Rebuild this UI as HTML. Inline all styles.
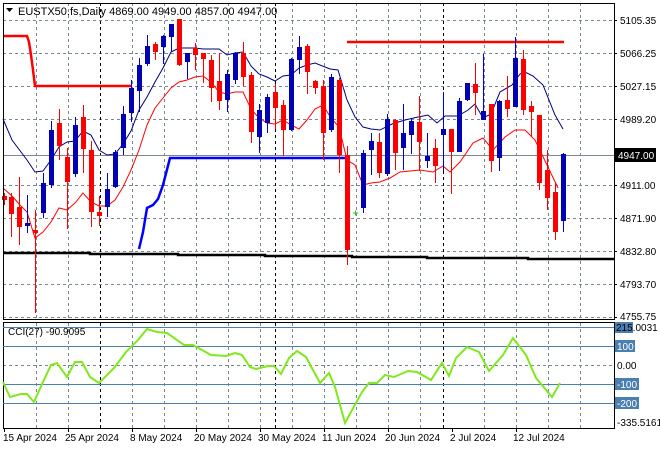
<!DOCTYPE html>
<html><head><meta charset="utf-8"><style>
html,body{margin:0;padding:0;background:#fff;width:660px;height:450px;overflow:hidden}
svg{display:block;font-family:"Liberation Sans",sans-serif}
</style></head><body>
<svg width="660" height="450" viewBox="0 0 660 450" xmlns="http://www.w3.org/2000/svg">
<rect width="660" height="450" fill="#fff"/>
<!-- grid main -->
<g stroke="#7b8794" stroke-width="1" stroke-dasharray="3,3" fill="none">
<path d="M3 20.5H614M3 53.5H614M3 86.5H614M3 119.5H614M3 185.5H614M3 218.5H614M3 251.5H614M3 284.5H614M3 317.5H614"/>
<path d="M36.5 3V320M68.5 3V320M132.5 3V320M164.5 3V320M196.5 3V320M228.5 3V320M260.5 3V320M292.5 3V320M324.5 3V320M356.5 3V320M388.5 3V320M420.5 3V320M484.5 3V320M516.5 3V320M548.5 3V320M580.5 3V320"/>
<path d="M36.5 323V428M68.5 323V428M132.5 323V428M164.5 323V428M196.5 323V428M228.5 323V428M260.5 323V428M292.5 323V428M324.5 323V428M356.5 323V428M388.5 323V428M420.5 323V428M484.5 323V428M516.5 323V428M548.5 323V428M580.5 323V428"/>
<path d="M3 365.5H614"/>
</g>
<g stroke="#000" stroke-width="1" stroke-dasharray="3,3">
<path d="M100.5 3V320M275.5 3V320M443.5 3V320M100.5 323V428M275.5 323V428M443.5 323V428"/>
</g>
<!-- current price line -->
<path d="M3 155.5H614" stroke="#7b8794" stroke-width="1"/>
<!-- indicator lines -->
<polyline fill="none" stroke="#ff0000" stroke-width="2.5" points="3,36 27,36 29,42 31,55 33,70 35,86 131,86"/>
<path d="M347 42H564" stroke="#ff0000" stroke-width="2.5"/>
<polyline fill="none" stroke="#0000ff" stroke-width="2.5" points="139,249 143,232 147,208 153,205 158,199 163,185 170,158 347,158"/>
<polyline fill="none" stroke="#000" stroke-width="2.5" points="3,253 90,253 90,254 178,254 178,255 265,255 265,256 352,256 352,257 427,257 427,258 528,258 528,259 614,259"/>
<polyline fill="none" stroke="#000080" stroke-width="1" points="3,119 12,140 27,160 35,172 43,171 51,160 59,147 67,142 75,141 83,131 91,135 99,150 107,155 115,154 123,144 131,131 139,110 147,97 155,82 163,68 171,52 179,48 195,48 203,49 219,49 227,55 235,53 243,52 251,66 259,74 267,77 275,81 283,76 291,75 299,68 307,65 315,63 330,69 338,70 347,100 355,117 363,127 371,129 380,130 392,124 405,120 418,117 428,115 437,123 445,116 458,116 468,110 475,104 483,118 491,114 500,92 512,85 520,74 525,72 533,76 543,85 555,115 563,129"/>
<polyline fill="none" stroke="#ff0000" stroke-width="1" points="3,188 12,196 20,205 27,212 35,238 43,232 51,222 59,208 67,210 75,203 83,193 91,202 99,206 107,206 115,200 123,187 131,170 139,150 147,125 155,108 163,98 171,88 179,82 187,80 195,77 203,76 211,82 219,92 227,94 235,92 243,92 251,109 259,118 267,123 275,124 283,120 291,125 299,129 307,120 315,109 323,105 331,118 339,127 347,160 355,165 363,185 371,183 380,182 390,178 400,172 420,170 433,172 443,166 450,172 460,162 473,143 483,138 493,150 505,137 515,130 525,130 535,140 547,165 558,188"/>
<!-- candles -->
<g stroke-width="1">
<g stroke="#ff0000" fill="#ff0000">
<path d="M4.5 193V205M11.5 193V237M19.5 177V245M35.5 210V313M59.5 109V160M67.5 148V229M83.5 105V173M91.5 141V227M99.5 196V226M155.5 42V60M179.5 19V66M195.5 43V70M203.5 53V83M211.5 55V102M219.5 53V110M243.5 42V86M251.5 72V143M275.5 84V129M283.5 100V156M307.5 44V94M315.5 80V94M323.5 80V160M339.5 78V173M347.5 146V265M379.5 133V178M395.5 119V170M419.5 96V171M435.5 139V183M451.5 129V194M475.5 63V115M491.5 104V172M507.5 76V117M523.5 50V115M531.5 101V137M539.5 115V190M547.5 150V210M555.5 182V240"/>
</g>
<g fill="#ff0000" stroke="none">
<rect x="2" y="196" width="5" height="4"/><rect x="9" y="197" width="5" height="17"/><rect x="17" y="207" width="5" height="20"/><rect x="33" y="230" width="5" height="3"/><rect x="57" y="123" width="5" height="23"/><rect x="65" y="157" width="5" height="25"/><rect x="81" y="117" width="5" height="32"/><rect x="89" y="150" width="5" height="62"/><rect x="97" y="212" width="5" height="4"/><rect x="153" y="44" width="5" height="8"/><rect x="177" y="19" width="5" height="46"/><rect x="193" y="48" width="5" height="7"/><rect x="201" y="53" width="5" height="6"/><rect x="209" y="60" width="5" height="28"/><rect x="217" y="81" width="5" height="20"/><rect x="241" y="53" width="5" height="24"/><rect x="249" y="75" width="5" height="57"/><rect x="273" y="92" width="5" height="16"/><rect x="281" y="105" width="5" height="25"/><rect x="305" y="46" width="5" height="26"/><rect x="313" y="81" width="5" height="7"/><rect x="321" y="86" width="5" height="47"/><rect x="337" y="80" width="5" height="75"/><rect x="345" y="155" width="5" height="95"/><rect x="377" y="142" width="5" height="31"/><rect x="393" y="120" width="5" height="33"/><rect x="417" y="122" width="5" height="20"/><rect x="433" y="148" width="5" height="18"/><rect x="449" y="129" width="5" height="23"/><rect x="473" y="84" width="5" height="9"/><rect x="489" y="104" width="5" height="57"/><rect x="505" y="100" width="5" height="9"/><rect x="521" y="59" width="5" height="51"/><rect x="529" y="106" width="5" height="6"/><rect x="537" y="115" width="5" height="68"/><rect x="545" y="170" width="5" height="28"/><rect x="553" y="192" width="5" height="40"/>
</g>
<g stroke="#0000d0">
<path d="M27.5 195V233M43.5 173V218M51.5 121V188M75.5 117V177M107.5 173V217M115.5 150V188M123.5 106V155M131.5 80V122M139.5 58V112M147.5 35V66M163.5 35V64M171.5 24V52M187.5 53V79M227.5 70V112M235.5 52V84M259.5 104V153M267.5 94V133M291.5 58V131M299.5 36V74M331.5 74V132M363.5 150V213M371.5 133V175M387.5 114V176M403.5 104V170M411.5 119V154M427.5 133V168M443.5 92V171M459.5 98V152M467.5 83V101M483.5 54V120M499.5 100V171M515.5 37V107M563.5 153V232"/>
</g>
<g fill="#0000b4" stroke="none">
<rect x="25" y="223" width="5" height="3"/><rect x="41" y="183" width="5" height="30"/><rect x="49" y="130" width="5" height="55"/><rect x="73" y="125" width="5" height="49"/><rect x="105" y="189" width="5" height="18"/><rect x="113" y="152" width="5" height="35"/><rect x="121" y="114" width="5" height="34"/><rect x="129" y="88" width="5" height="25"/><rect x="137" y="65" width="5" height="26"/><rect x="145" y="46" width="5" height="18"/><rect x="161" y="36" width="5" height="11"/><rect x="169" y="24" width="5" height="13"/><rect x="185" y="53" width="5" height="9"/><rect x="225" y="74" width="5" height="26"/><rect x="233" y="53" width="5" height="27"/><rect x="257" y="110" width="5" height="27"/><rect x="265" y="97" width="5" height="26"/><rect x="289" y="59" width="5" height="71"/><rect x="297" y="47" width="5" height="13"/><rect x="329" y="77" width="5" height="53"/><rect x="361" y="153" width="5" height="55"/><rect x="369" y="141" width="5" height="9"/><rect x="385" y="119" width="5" height="55"/><rect x="401" y="133" width="5" height="15"/><rect x="409" y="121" width="5" height="14"/><rect x="425" y="156" width="5" height="5"/><rect x="441" y="129" width="5" height="6"/><rect x="457" y="101" width="5" height="51"/><rect x="465" y="83" width="5" height="17"/><rect x="481" y="111" width="5" height="9"/><rect x="497" y="101" width="5" height="57"/><rect x="513" y="58" width="5" height="49"/><rect x="561" y="154" width="5" height="67"/>
</g>
</g>
<path d="M353 213H358M355.5 210.5V215.5" stroke="#22cc22" stroke-width="1"/>
<!-- frames -->
<rect x="3.5" y="3.5" width="611" height="316" fill="none" stroke="#000"/>
<rect x="3.5" y="322.5" width="611" height="106" fill="none" stroke="#000"/>
<!-- CCI levels -->
<g stroke="#4a7fb0" stroke-width="1">
<path d="M3 327.5H614M3 346.5H614M3 384.5H614M3 403.5H614"/>
</g>
<polyline fill="none" stroke="#80e81c" stroke-width="2" points="3,382 10,397 21,394 27,394 34,402 43,382 51,365 57,363 67,377 75,362 82,362 90,377 99,383 114,368 126,352 138,340 147,329 157,332 167,333 184,345 193,345 211,355 226,356 235,353 242,355 250,367 256,369 268,366 274,366 281,374 289,358 297,351 306,357 320,383 329,373 335,387 345,423 362,392 369,383 377,383 385,375 394,377 408,371 417,372 431,380 442,363 449,376 456,358 467,347 479,352 489,371 503,355 513,338 526,355 536,378 552,397 560,383"/>
<!-- header -->
<path d="M6 8H13L9.5 12Z" fill="#000"/>
<text x="18" y="15" font-size="11" fill="#000">EUSTX50.fs,Daily  4869.00 4949.00 4857.00 4947.00</text>
<text x="8" y="335" font-size="10" fill="#000">CCI(27) -90.9095</text>
<!-- price axis -->
<g font-size="10" fill="#000">
<text x="620" y="24">5105.35</text>
<text x="620" y="57">5066.25</text>
<text x="620" y="90">5027.15</text>
<text x="620" y="123">4989.20</text>
<text x="620" y="189">4911.00</text>
<text x="620" y="222">4871.90</text>
<text x="620" y="255">4832.80</text>
<text x="620" y="288">4793.70</text>
<text x="620" y="320">4755.75</text>
</g>
<g stroke="#000"><path d="M614 20.5h3M614 53.5h3M614 86.5h3M614 119.5h3M614 185.5h3M614 218.5h3M614 251.5h3M614 284.5h3M614 317.5h3"/></g>
<rect x="615" y="148" width="41" height="14" fill="#000"/>
<text x="618" y="159" font-size="10" fill="#fff">4947.00</text>
<!-- CCI axis -->
<rect x="615" y="322" width="18" height="11" fill="#4a7fb0"/>
<text x="616" y="331" font-size="10" fill="#000">215.0031</text>
<rect x="615" y="340" width="20" height="12" fill="#4a7fb0"/><text x="617" y="350" font-size="10" fill="#fff">100</text>
<text x="617" y="369" font-size="10" fill="#000">0.00</text>
<rect x="615" y="378" width="24" height="12" fill="#4a7fb0"/><text x="617" y="388" font-size="10" fill="#fff">-100</text>
<rect x="615" y="397" width="24" height="12" fill="#4a7fb0"/><text x="617" y="407" font-size="10" fill="#fff">-200</text>
<text x="617" y="426" font-size="10" fill="#000">-335.5161</text>
<!-- date axis -->
<g font-size="10" fill="#000">
<text x="3" y="441">15 Apr 2024</text>
<text x="65" y="441">25 Apr 2024</text>
<text x="130" y="441">8 May 2024</text>
<text x="194" y="441">20 May 2024</text>
<text x="258" y="441">30 May 2024</text>
<text x="322" y="441">11 Jun 2024</text>
<text x="385" y="441">20 Jun 2024</text>
<text x="450" y="441">2 Jul 2024</text>
<text x="513" y="441">12 Jul 2024</text>
</g>
<g stroke="#000"><path d="M4.5 429v3M68.5 429v3M132.5 429v3M196.5 429v3M260.5 429v3M324.5 429v3M388.5 429v3M452.5 429v3M516.5 429v3"/></g>
</svg>
</body></html>
